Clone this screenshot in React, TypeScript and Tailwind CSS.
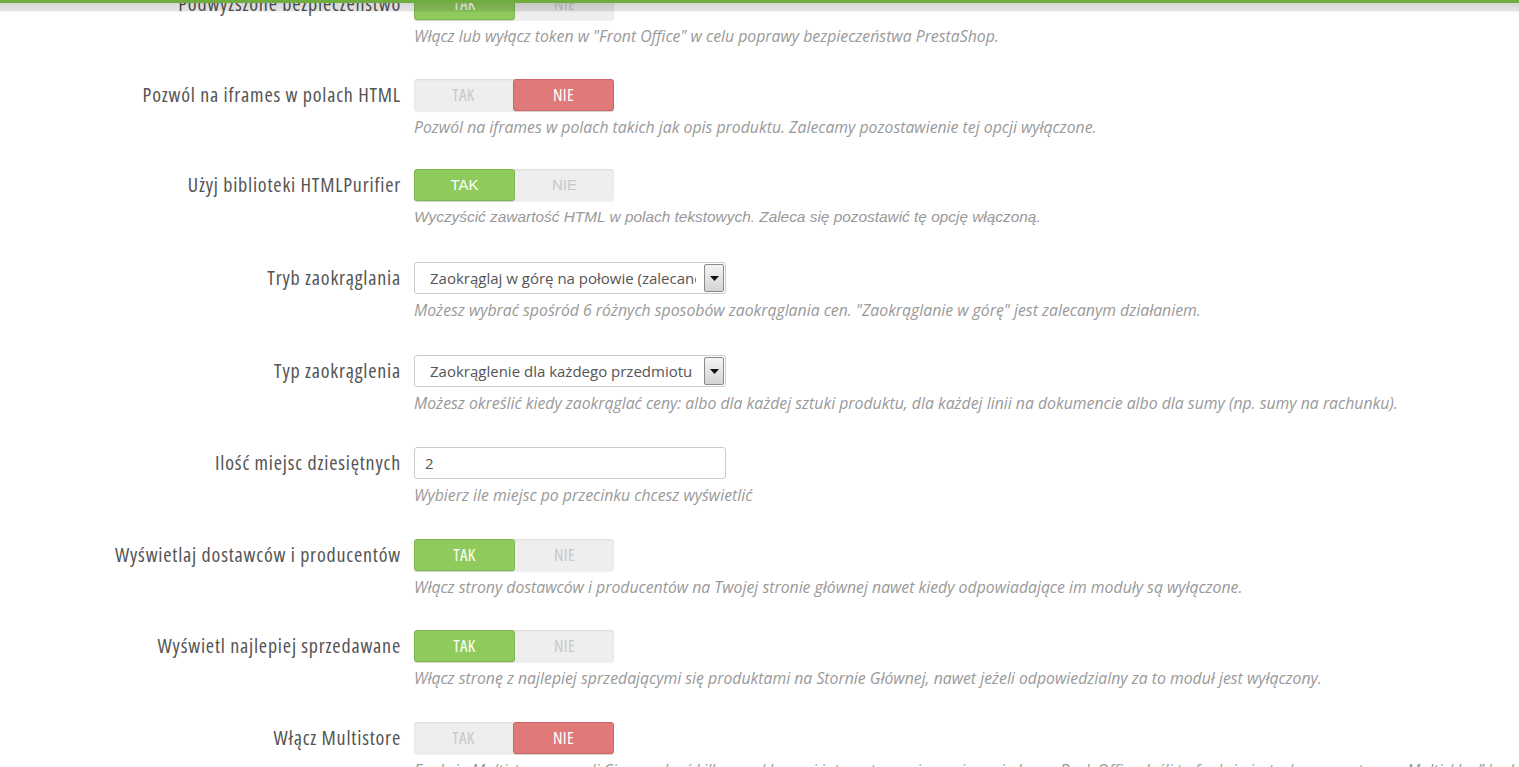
import React from "react";

type Row =
  | { kind: "toggle"; label: string; value: boolean; help: string; alt?: boolean; mb: string }
  | { kind: "select"; label: string; value: string; help: string; mb: string }
  | { kind: "input"; label: string; value: string; help: string; mb: string };

const rows: Row[] = [
  { kind: "toggle", label: "Podwyższone bezpieczeństwo", value: true, help: 'Włącz lub wyłącz token w "Front Office" w celu poprawy bezpieczeństwa PrestaShop.', mb: "mb-[33px]" },
  { kind: "toggle", label: "Pozwól na iframes w polach HTML", value: false, help: "Pozwól na iframes w polach takich jak opis produktu. Zalecamy pozostawienie tej opcji wyłączone.", mb: "mb-[32px]" },
  { kind: "toggle", label: "Użyj biblioteki HTMLPurifier", value: true, alt: true, help: "Wyczyścić zawartość HTML w polach tekstowych. Zaleca się pozostawić tę opcję włączoną.", mb: "mb-[35px]" },
  { kind: "select", label: "Tryb zaokrąglania", value: "Zaokrąglaj w górę na połowie (zalecane)", help: 'Możesz wybrać spośród 6 różnych sposobów zaokrąglania cen. "Zaokrąglanie w górę" jest zalecanym działaniem.', mb: "mb-[35px]" },
  { kind: "select", label: "Typ zaokrąglenia", value: "Zaokrąglenie dla każdego przedmiotu", help: "Możesz określić kiedy zaokrąglać ceny: albo dla każdej sztuki produktu, dla każdej linii na dokumencie albo dla sumy (np. sumy na rachunku).", mb: "mb-[34px]" },
  { kind: "input", label: "Ilość miejsc dziesiętnych", value: "2", help: "Wybierz ile miejsc po przecinku chcesz wyświetlić", mb: "mb-[34px]" },
  { kind: "toggle", label: "Wyświetlaj dostawców i producentów", value: true, help: "Włącz strony dostawców i producentów na Twojej stronie głównej nawet kiedy odpowiadające im moduły są wyłączone.", mb: "mb-[33px]" },
  { kind: "toggle", label: "Wyświetl najlepiej sprzedawane", value: true, help: "Włącz stronę z najlepiej sprzedającymi się produktami na Stornie Głównej, nawet jeżeli odpowiedzialny za to moduł jest wyłączony.", mb: "mb-[34px]" },
  { kind: "toggle", label: "Włącz Multistore", value: false, help: "Funkcja Multistore pozwoli Ci zarządzać kilkoma sklepami internetowymi z poziomu jednego Back Office. Jeśli ta funkcja jest włączona, strona \u201EMultisklep\u201D będzie dostępna.", mb: "mb-[33px]" },
];

const cond = "font-['Open_Sans',sans-serif] font-stretch-[75%]";

function Toggle({ value, alt }: { value: boolean; alt?: boolean }) {
  const font = alt ? "font-['Liberation_Sans',Arial,sans-serif] text-[15px]" : `${cond} text-[17px] tracking-[0.3px]`;
  return (
    <div className={`flex h-[32px] w-[200px] rounded-[3px] bg-[#eeeeee] shadow-[inset_0_1px_2px_rgba(0,0,0,0.08),0_1px_1px_rgba(0,0,0,0.06)] ${font}`}>
      <div
        className={`flex flex-1 items-center justify-center rounded-[3px] ${
          value
            ? "bg-[#8ecb5c] text-white border border-[#7db84b] shadow-[0_1px_0_rgba(0,0,0,0.12)]"
            : "text-[#c8c8c8]"
        }`}
      >
        TAK
      </div>
      <div
        className={`flex flex-1 items-center justify-center rounded-[3px] ${
          !value
            ? "bg-[#e07a78] text-white border border-[#cf6462] shadow-[0_1px_0_rgba(0,0,0,0.12)]"
            : "text-[#c8c8c8]"
        }`}
      >
        NIE
      </div>
    </div>
  );
}

function Select({ value }: { value: string }) {
  return (
    <div className="flex h-[32px] w-[312px] items-center rounded-[3px] border border-[#cccccc] bg-white pl-[15px] pr-[1px] font-['Open_Sans',sans-serif] text-[15px] text-[#555555]">
      <div className="flex-1 overflow-hidden whitespace-nowrap">{value}</div>
      <div className="ml-[8px] flex h-[28px] w-[20px] shrink-0 items-center justify-center rounded-[2px] border border-[#8a8a8a] bg-gradient-to-b from-[#f4f4f4] to-[#d4d4d4]">
        <svg width="9" height="5" viewBox="0 0 9 5">
          <path d="M0 0H9L4.5 5Z" fill="#111" />
        </svg>
      </div>
    </div>
  );
}

function Input({ value }: { value: string }) {
  return (
    <div className="flex h-[32px] w-[312px] items-center rounded-[3px] border border-[#cccccc] bg-white pl-[10px] font-['Open_Sans',sans-serif] text-[15px] text-[#555555]">
      {value}
    </div>
  );
}

export default function App() {
  return (
    <div className="relative h-[767px] w-full overflow-hidden bg-white">
      <div className="mt-[-12px] flex flex-col">
        {rows.map((r, i) => (
          <div key={i} className={`flex ${r.mb}`}>
            <div className="flex h-[32px] w-[401px] shrink-0 items-center justify-end whitespace-nowrap font-['Open_Sans',sans-serif] text-[20px] font-stretch-[75%] tracking-[0.8px] text-[#555555]">
              {r.label}
            </div>
            <div className="ml-[13px] flex flex-col">
              {r.kind === "toggle" && <Toggle value={r.value} alt={r.alt} />}
              {r.kind === "select" && <Select value={r.value} />}
              {r.kind === "input" && <Input value={r.value} />}
              <div
                className={`mt-[6px] whitespace-nowrap leading-[20px] italic text-[#999999] ${
                  r.kind === "toggle" && r.alt
                    ? "font-['Liberation_Sans',Arial,sans-serif] text-[15.4px]"
                    : "font-['Open_Sans',sans-serif] text-[15.8px]"
                }`}
              >
                {r.help}
              </div>
            </div>
          </div>
        ))}
      </div>
      <div className="pointer-events-none absolute left-0 right-0 top-0">
        <div className="h-[3px] bg-[#6fad3e]" />
        <div className="h-[8px] bg-gradient-to-b from-[rgba(0,0,0,0.16)] to-[rgba(0,0,0,0.10)]" />
        <div className="h-[2px] bg-gradient-to-b from-[rgba(0,0,0,0.06)] to-transparent" />
      </div>
    </div>
  );
}
